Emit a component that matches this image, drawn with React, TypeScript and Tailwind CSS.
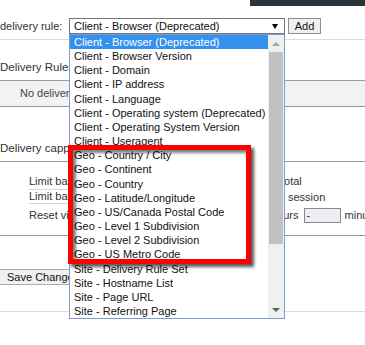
import React from "react";

const rules = [
  "Client - Browser (Deprecated)",
  "Client - Browser Version",
  "Client - Domain",
  "Client - IP address",
  "Client - Language",
  "Client - Operating system (Deprecated)",
  "Client - Operating System Version",
  "Client - Useragent",
  "Geo - Country / City",
  "Geo - Continent",
  "Geo - Country",
  "Geo - Latitude/Longitude",
  "Geo - US/Canada Postal Code",
  "Geo - Level 1 Subdivision",
  "Geo - Level 2 Subdivision",
  "Geo - US Metro Code",
  "Site - Delivery Rule Set",
  "Site - Hostname List",
  "Site - Page URL",
  "Site - Referring Page",
];

/* ── Open select list ─────────────────────────────────────── */
function RuleList() {
  return (
    <div className="absolute left-[69px] top-[34px] flex w-[216px] border border-[#7a9cd3] bg-white">
      <ul className="flex-1">
        {rules.map((r, i) => (
          <li
            key={r}
            className={
              i === 0
                ? "h-[14.16px] whitespace-nowrap bg-[#3390ec] pl-[4px] leading-[14px] text-white"
                : "h-[14.16px] whitespace-nowrap pl-[4px] leading-[14px] text-[#111]"
            }
          >
            {r}
          </li>
        ))}
      </ul>
      {/* scrollbar */}
      <div className="flex w-[16px] flex-col bg-[#f0f0f0]">
        <div className="flex h-[17px] items-center justify-center">
          <div className="h-0 w-0 border-x-[4px] border-b-[4px] border-x-transparent border-b-[#a6a6a6]" />
        </div>
        <div className="mx-[1px] h-[192px] bg-[#c1c1c1]" />
        <div className="flex-1" />
        <div className="flex h-[17px] items-center justify-center">
          <div className="h-0 w-0 border-x-[4px] border-t-[4px] border-x-transparent border-t-[#606060]" />
        </div>
      </div>
    </div>
  );
}

export default function App() {
  return (
    <div
      className="relative h-[345px] w-[365px] overflow-hidden bg-white text-[11px] text-[#333]"
      style={{ fontFamily: '"Liberation Sans", Arial, sans-serif' }}
    >
      <div className="flex h-[6px] justify-end">
        <div className="w-[115px] bg-[#2b3439]" />
      </div>

      {/* rule picker */}
      <div className="mt-[12px] flex h-[16px] items-center">
        <span className="w-[69px] shrink-0 whitespace-nowrap">delivery rule:</span>
        <div className="flex h-[16px] w-[216px] shrink-0 items-center justify-between border border-[#767676] bg-white pl-[4px] pr-[6px] text-[#111]">
          <span>Client - Browser (Deprecated)</span>
          <div className="h-0 w-0 border-x-[3px] border-t-[5px] border-x-transparent border-t-black" />
        </div>
        <button className="ml-[3px] h-[16px] w-[33px] shrink-0 border border-[#8f8f8f] bg-[#efefef] leading-[13px] text-[#111]">
          Add
        </button>
      </div>
      <div className="mt-[5px] h-px bg-[#dcdcdc]" />

      {/* delivery rules */}
      <div className="h-[40px] whitespace-nowrap pt-[20px] text-[11.5px] leading-[14px]">Delivery Rules</div>
      <div className="h-px bg-[#999]" />
      <div className="flex h-[25px] items-center whitespace-nowrap bg-[#f2f2f2] pl-[20px] text-[#444]">
        No delivery rules defined
      </div>
      <div className="h-px bg-[#999]" />

      {/* capping */}
      <div className="h-[54px] whitespace-nowrap pt-[34px] text-[11.5px] leading-[14px]">
        Delivery capping per visitor
      </div>
      <div className="h-px bg-[#999]" />

      <div className="mt-[11px]">
        <div className="flex h-[17px] items-center whitespace-nowrap">
          <div className="ml-[29px] flex h-full w-[252px] shrink-0 items-center border-b border-[#d6d6d6]">
            Limit based on views
          </div>
          <span>total</span>
        </div>
        <div className="flex h-[14px] items-center whitespace-nowrap">
          <div className="ml-[29px] flex h-full w-[240px] shrink-0 items-center border-b border-[#d6d6d6]">
            Limit based on views
          </div>
          <span>per session</span>
        </div>
        <div className="flex h-[22px] items-center whitespace-nowrap">
          <div className="ml-[29px] flex h-full w-[242px] shrink-0 items-center">Reset view counters</div>
          <span className="shrink-0">hours</span>
          <div className="ml-[5px] flex h-[15px] w-[37px] shrink-0 items-center border border-[#8a8a8a] bg-[#eceef2] pl-[2px] leading-[13px]">
            -
          </div>
          <span className="ml-[4px] shrink-0">minutes</span>
        </div>
      </div>
      <div className="mt-[9px] h-px bg-[#999]" />

      <button className="ml-[-2px] mt-[33px] flex h-[16px] items-center whitespace-nowrap border border-[#adadad] bg-[#f0f0f0] pl-[8px] pr-[6px] text-[#111]">
        Save Changes
      </button>
      <div className="mt-[26px] h-px bg-[#dcdcdc]" />

      <RuleList />

      {/* highlight annotation */}
      <div className="absolute left-[68px] top-[145px] h-[119px] w-[183px] border-[5px] border-[#ff0000] shadow-[3px_3px_3px_rgba(0,0,0,0.65),inset_3px_3px_3px_rgba(0,0,0,0.5)]" />
    </div>
  );
}
